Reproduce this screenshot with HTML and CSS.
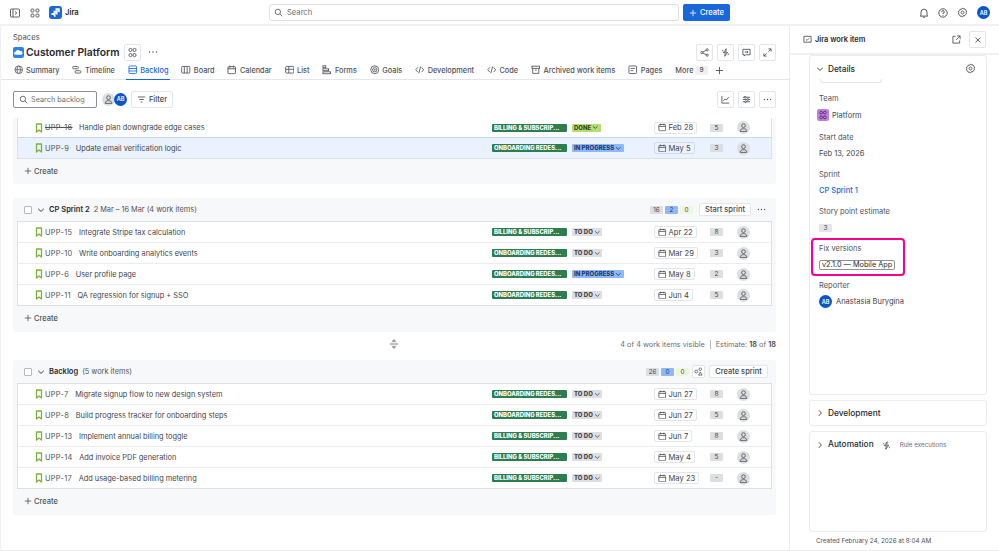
FILE: index.html
```html
<!DOCTYPE html>
<html lang="en">
<head>
<meta charset="utf-8">
<title>Jira backlog</title>
<link rel="stylesheet" href="styles.css">
</head>
<body>
<svg class="defs" xmlns="http://www.w3.org/2000/svg">
  <symbol id="story" viewBox="0 0 8 10"><path d="M1.500 1h5v8L4 7 1.500 9z" fill="none" stroke="#7fb03c" stroke-width="1.300" stroke-linejoin="round"/></symbol>
  <symbol id="person" viewBox="0 0 14 14"><circle cx="7" cy="7" r="7" fill="#dddee1"/><circle cx="7" cy="5" r="2" fill="none" stroke="#505258" stroke-width=".9"/><path d="M3.400 11.200c0-2 1.500-3 3.600-3s3.600 1 3.600 3z" fill="none" stroke="#505258" stroke-width=".9" stroke-linejoin="round"/></symbol>
  <symbol id="cal" viewBox="0 0 10 10"><rect x="1" y="1.800" width="8" height="7.400" rx="1" fill="none" stroke="#44464c" stroke-width=".9"/><path d="M1 4h8M3 .7v2M7 .7v2" stroke="#44464c" stroke-width=".9" fill="none"/></symbol>
  <symbol id="chev" viewBox="0 0 8 8"><path d="M1.200 2.800 4 5.400l2.800-2.600" fill="none" stroke="currentColor" stroke-width="1"/></symbol>
  <symbol id="chevr" viewBox="0 0 8 8"><path d="M2.800 1.200 5.400 4 2.800 6.800" fill="none" stroke="#505258" stroke-width="1"/></symbol>
  <symbol id="plus" viewBox="0 0 10 10"><path d="M5 1v8M1 5h8" stroke="currentColor" stroke-width="1" fill="none"/></symbol>
  <symbol id="people" viewBox="0 0 12 12"><circle cx="3.800" cy="3.200" r="1.700" fill="none" stroke="currentColor" stroke-width=".9"/><circle cx="8.200" cy="3.200" r="1.700" fill="none" stroke="currentColor" stroke-width=".9"/><circle cx="3.800" cy="8.800" r="1.700" fill="none" stroke="currentColor" stroke-width=".9"/><circle cx="8.200" cy="8.800" r="1.700" fill="none" stroke="currentColor" stroke-width=".9"/></symbol>
  <symbol id="bolt" viewBox="0 0 10 10"><path d="M5.800 .8 2.600 5.200h2.200L4.200 9.200l3.200-4.400H5.200zM1 3.500l1.500-1M9 6.500l-1.500 1" fill="none" stroke="#44464c" stroke-width=".9" stroke-linejoin="round"/></symbol>
  <symbol id="dots" viewBox="0 0 10 10"><circle cx="1.500" cy="5" r=".7" fill="#44464c"/><circle cx="5" cy="5" r=".7" fill="#44464c"/><circle cx="8.500" cy="5" r=".7" fill="#44464c"/></symbol>
  <symbol id="code" viewBox="0 0 10 10"><path d="M3 2.500.8 5 3 7.500M7 2.500 9.200 5 7 7.500M6 1.500 4 8.500" fill="none" stroke="#505258" stroke-width=".9"/></symbol>
  <symbol id="search" viewBox="0 0 10 10"><circle cx="4.300" cy="4.300" r="3" fill="none" stroke="#505258" stroke-width=".9"/><path d="m6.500 6.500 2.700 2.700" stroke="#505258" stroke-width=".9"/></symbol>
  <symbol id="gear" viewBox="0 0 12 12"><path d="M6 1l1 1.100 1.600-.2.500 1.500 1.400.8-.5 1.500.5 1.600-1.400.8-.5 1.500-1.600-.2L6 11l-1-1.100-1.600.2-.5-1.500-1.400-.8.5-1.600-.5-1.500 1.400-.8.500-1.500 1.600.2z" fill="none" stroke="#44464c" stroke-width=".9" stroke-linejoin="round"/><circle cx="6" cy="6" r="1.600" fill="none" stroke="#44464c" stroke-width=".9"/></symbol>
</svg>

<header class="topbar">
  <div class="top-left">
    <svg class="i-10" viewBox="0 0 10 10"><rect x=".5" y="1" width="9" height="8" rx="1" fill="none" stroke="#505258" stroke-width=".9"/><path d="M3 1v8M5 3.500 6.800 5 5 6.500" fill="none" stroke="#505258" stroke-width=".9"/></svg>
    <svg class="i-10 gap-apps" viewBox="0 0 10 10"><g fill="none" stroke="#505258" stroke-width=".9"><rect x="1" y="1" width="3" height="3" rx="1"/><rect x="6" y="1" width="3" height="3" rx="1"/><rect x="1" y="6" width="3" height="3" rx="1"/><rect x="6" y="6" width="3" height="3" rx="1"/></g></svg>
    <svg class="logo" viewBox="0 0 13 13"><rect width="13" height="13" rx="3" fill="#1868db"/><path d="M6.500 2.300h4.200v4.200A2 2 0 0 1 8.700 4.500H6.500zM4.500 4.700h4v4a2 2 0 0 1-2-2h-2zM2.500 7h4v4a2 2 0 0 1-2-2h-2z" fill="#fff"/></svg>
    <span class="brand">Jira</span>
  </div>
  <div class="top-search"><svg class="i-9" viewBox="0 0 10 10"><use href="#search"/></svg><span>Search</span></div>
  <button class="create-btn"><svg class="i-8" viewBox="0 0 10 10"><use href="#plus"/></svg>Create</button>
  <div class="top-right">
    <svg class="i-10" viewBox="0 0 10 10"><path d="M2 7.300V4.200a3 3 0 0 1 6 0v3.100l.8.8H1.200zM4 9.200h2" fill="none" stroke="#44464c" stroke-width=".9" stroke-linejoin="round"/></svg>
    <svg class="i-10" viewBox="0 0 10 10"><circle cx="5" cy="5" r="4.200" fill="none" stroke="#44464c" stroke-width=".9"/><path d="M3.700 3.900A1.300 1.300 0 1 1 5 5.300v.8M5 7v.8" fill="none" stroke="#44464c" stroke-width=".9"/></svg>
    <svg class="i-gear" viewBox="0 0 12 12"><use href="#gear"/></svg>
    <span class="avatar av-top">AB</span>
  </div>
</header>

<div class="layout">
  <main class="main">
    <div class="crumb">Spaces</div>
    <div class="title-row">
      <svg class="space-icon" viewBox="0 0 11 11"><rect width="11" height="11" rx="2" fill="#2a83ea"/><path d="M2.500 7.800a1.500 1.500 0 0 1 .2-3A2.300 2.300 0 0 1 7 4.300a1.800 1.800 0 0 1 1.300 3.500z" fill="#fff"/></svg>
      <h1>Customer Platform</h1>
      <span class="icon-btn team-btn"><svg class="i-11" viewBox="0 0 12 12"><use href="#people"/></svg></span>
      <svg class="i-10 title-dots" viewBox="0 0 10 10"><use href="#dots"/></svg>
      <div class="btn-group">
        <span class="icon-btn"><svg class="i-9" viewBox="0 0 10 10"><g fill="none" stroke="#44464c" stroke-width=".9"><circle cx="2" cy="5" r="1.200"/><circle cx="8" cy="2" r="1.200"/><circle cx="8" cy="8" r="1.200"/><path d="M3 4.500 7 2.500M3 5.500l4 2"/></g></svg></span>
        <span class="icon-btn"><svg class="i-9" viewBox="0 0 10 10"><use href="#bolt"/></svg></span>
        <span class="icon-btn"><svg class="i-9" viewBox="0 0 10 10"><path d="M1 1.500h8v6H4L2.500 9V7.500H1zM3 4.500h3.500M5.500 3.300l1.200 1.200-1.200 1.200" fill="none" stroke="#44464c" stroke-width=".9"/></svg></span>
        <span class="icon-btn"><svg class="i-9" viewBox="0 0 10 10"><path d="M6 1h3v3M9 1 6 4M4 9H1V6M1 9l3-3" fill="none" stroke="#44464c" stroke-width=".9"/></svg></span>
      </div>
    </div>
    <nav class="tabs">
      <a class="tab"><svg class="tab-icon" viewBox="0 0 10 10"><g fill="none" stroke="#505258" stroke-width=".8"><circle cx="5" cy="5" r="4"/><ellipse cx="5" cy="5" rx="1.800" ry="4"/><path d="M1 5h8"/></g></svg>Summary</a>
      <a class="tab"><svg class="tab-icon" viewBox="0 0 10 10"><g fill="none" stroke="#505258" stroke-width=".9"><rect x=".7" y="1.500" width="6" height="2.500" rx="1"/><rect x="3.300" y="6" width="6" height="2.500" rx="1"/></g></svg>Timeline</a>
      <a class="tab active"><svg class="tab-icon" viewBox="0 0 10 10"><g fill="none" stroke="#1868db" stroke-width=".9"><rect x="1" y="1" width="8" height="8" rx="1"/><path d="M1 3.700h8M1 6.300h8"/></g></svg>Backlog</a>
      <a class="tab"><svg class="tab-icon" viewBox="0 0 10 10"><g fill="none" stroke="#505258" stroke-width=".9"><rect x=".7" y="1.500" width="8.600" height="7" rx="1"/><path d="M3.500 1.500v7M6.500 1.500v7"/></g></svg>Board</a>
      <a class="tab"><svg class="tab-icon" viewBox="0 0 10 10"><use href="#cal"/></svg>Calendar</a>
      <a class="tab"><svg class="tab-icon" viewBox="0 0 10 10"><g fill="none" stroke="#505258" stroke-width=".9"><rect x=".7" y="1.500" width="8.600" height="7" rx="1"/><path d="M.7 4.500h8.600M4 1.500v7"/></g></svg>List</a>
      <a class="tab"><svg class="tab-icon" viewBox="0 0 10 10"><g fill="none" stroke="#505258" stroke-width=".9"><rect x="1" y=".8" width="3" height="2"/><rect x="1" y="4" width="6" height="2"/><rect x="1" y="7.200" width="8" height="2"/></g></svg>Forms</a>
      <a class="tab"><svg class="tab-icon" viewBox="0 0 10 10"><g fill="none" stroke="#505258" stroke-width=".9"><circle cx="5" cy="5" r="4.200"/><circle cx="5" cy="5" r="2.300"/><circle cx="5" cy="5" r=".6"/></g></svg>Goals</a>
      <a class="tab"><svg class="tab-icon" viewBox="0 0 10 10"><use href="#code"/></svg>Development</a>
      <a class="tab"><svg class="tab-icon" viewBox="0 0 10 10"><use href="#code"/></svg>Code</a>
      <a class="tab"><svg class="tab-icon" viewBox="0 0 10 10"><g fill="none" stroke="#505258" stroke-width=".9"><rect x="1" y="1.200" width="8" height="2.300"/><path d="M1.800 3.500v5.300h6.400V3.500M4 5.400h2"/></g></svg>Archived work items</a>
      <a class="tab"><svg class="tab-icon" viewBox="0 0 10 10"><g fill="none" stroke="#505258" stroke-width=".9"><rect x="1" y="1" width="8" height="8" rx="1"/><path d="M2.800 3.600h4.400M2.800 6h2.800"/></g></svg>Pages</a>
      <a class="tab tab-more">More<span class="more-chip">9</span></a>
      <svg class="i-9 tab-plus" viewBox="0 0 10 10"><use href="#plus"/></svg>
    </nav>
    <div class="toolbar">
      <div class="search-box"><svg class="i-9" viewBox="0 0 10 10"><use href="#search"/></svg><span>Search backlog</span></div>
      <div class="avatars"><svg class="tool-person" viewBox="0 0 14 14"><use href="#person"/></svg><span class="avatar av-tool">AB</span></div>
      <button class="filter-btn"><svg class="i-9" viewBox="0 0 10 10"><path d="M1 2.200h8M2.500 5h5M4 7.800h2" stroke="#44464c" stroke-width=".9" fill="none"/></svg>Filter</button>
      <div class="btn-group">
        <span class="icon-btn"><svg class="i-9" viewBox="0 0 10 10"><path d="M1 1v8h8M2.500 6.500l2-2 1.500 1 2.500-3" fill="none" stroke="#44464c" stroke-width=".9"/></svg></span>
        <span class="icon-btn"><svg class="i-9" viewBox="0 0 10 10"><g fill="none" stroke="#44464c" stroke-width=".9"><path d="M1 2.500h8M1 5h8M1 7.500h8"/><circle cx="3.500" cy="2.500" r="1" fill="#fff"/><circle cx="6.500" cy="5" r="1" fill="#fff"/><circle cx="4" cy="7.500" r="1" fill="#fff"/></g></svg></span>
        <span class="icon-btn"><svg class="i-9" viewBox="0 0 10 10"><use href="#dots"/></svg></span>
      </div>
    </div>

    <div class="board">
      <section class="sprint sprint-clipped">
        <div class="rows rows-clipped">
          <div class="row row-first"><svg class="story" viewBox="0 0 8 10"><use href="#story"/></svg><span class="key done-key">UPP-16</span><span class="summary">Handle plan downgrade edge cases</span><span class="epic">BILLING &amp; SUBSCRIP...</span><span class="status-col"><span class="status st-done">DONE<svg viewBox="0 0 8 8"><use href="#chev"/></svg></span></span><span class="date-col"><span class="date"><svg viewBox="0 0 10 10"><use href="#cal"/></svg>Feb 28</span></span><span class="pts">5</span><svg class="assignee" viewBox="0 0 14 14"><use href="#person"/></svg></div>
          <div class="row row-selected"><svg class="story" viewBox="0 0 8 10"><use href="#story"/></svg><span class="key">UPP-9</span><span class="summary">Update email verification logic</span><span class="epic">ONBOARDING REDES...</span><span class="status-col"><span class="status st-prog">IN PROGRESS<svg viewBox="0 0 8 8"><use href="#chev"/></svg></span></span><span class="date-col"><span class="date"><svg viewBox="0 0 10 10"><use href="#cal"/></svg>May 5</span></span><span class="pts">3</span><svg class="assignee" viewBox="0 0 14 14"><use href="#person"/></svg></div>
        </div>
        <div class="create-row"><svg class="i-8" viewBox="0 0 10 10"><use href="#plus"/></svg>Create</div>
      </section>

      <section class="sprint">
        <div class="sprint-head">
          <span class="check"></span><svg class="head-chev" viewBox="0 0 8 8"><use href="#chev"/></svg>
          <strong>CP Sprint 2</strong><span class="head-meta">2 Mar – 16 Mar (4 work items)</span>
          <span class="counts"><span class="count c-grey">16</span><span class="count c-blue">2</span><span class="count c-green">0</span></span>
          <button class="sprint-btn btn-start">Start sprint</button>
          <svg class="head-dots" viewBox="0 0 10 10"><use href="#dots"/></svg>
        </div>
        <div class="rows">
          <div class="row"><svg class="story" viewBox="0 0 8 10"><use href="#story"/></svg><span class="key">UPP-15</span><span class="summary">Integrate Stripe tax calculation</span><span class="epic">BILLING &amp; SUBSCRIP...</span><span class="status-col"><span class="status st-todo">TO DO<svg viewBox="0 0 8 8"><use href="#chev"/></svg></span></span><span class="date-col"><span class="date"><svg viewBox="0 0 10 10"><use href="#cal"/></svg>Apr 22</span></span><span class="pts">8</span><svg class="assignee" viewBox="0 0 14 14"><use href="#person"/></svg></div>
          <div class="row"><svg class="story" viewBox="0 0 8 10"><use href="#story"/></svg><span class="key">UPP-10</span><span class="summary">Write onboarding analytics events</span><span class="epic">ONBOARDING REDES...</span><span class="status-col"><span class="status st-todo">TO DO<svg viewBox="0 0 8 8"><use href="#chev"/></svg></span></span><span class="date-col"><span class="date"><svg viewBox="0 0 10 10"><use href="#cal"/></svg>Mar 29</span></span><span class="pts">3</span><svg class="assignee" viewBox="0 0 14 14"><use href="#person"/></svg></div>
          <div class="row"><svg class="story" viewBox="0 0 8 10"><use href="#story"/></svg><span class="key">UPP-6</span><span class="summary">User profile page</span><span class="epic">ONBOARDING REDES...</span><span class="status-col"><span class="status st-prog">IN PROGRESS<svg viewBox="0 0 8 8"><use href="#chev"/></svg></span></span><span class="date-col"><span class="date"><svg viewBox="0 0 10 10"><use href="#cal"/></svg>May 8</span></span><span class="pts">2</span><svg class="assignee" viewBox="0 0 14 14"><use href="#person"/></svg></div>
          <div class="row"><svg class="story" viewBox="0 0 8 10"><use href="#story"/></svg><span class="key">UPP-11</span><span class="summary">QA regression for signup + SSO</span><span class="epic">ONBOARDING REDES...</span><span class="status-col"><span class="status st-todo">TO DO<svg viewBox="0 0 8 8"><use href="#chev"/></svg></span></span><span class="date-col"><span class="date"><svg viewBox="0 0 10 10"><use href="#cal"/></svg>Jun 4</span></span><span class="pts">5</span><svg class="assignee" viewBox="0 0 14 14"><use href="#person"/></svg></div>
        </div>
        <div class="create-row"><svg class="i-8" viewBox="0 0 10 10"><use href="#plus"/></svg>Create</div>
      </section>

      <div class="totals">
        <svg class="drag" viewBox="0 0 10 10"><path d="M5 .5 3.200 2.500h3.600zM5 9.500 3.200 7.500h3.600zM1 4.300h8M1 5.700h8" fill="#8c8f97" stroke="#8c8f97" stroke-width=".7"/></svg>
        <span>4 of 4 work items visible</span><span class="sep"></span><span>Estimate: <b>18</b> of <b>18</b></span>
      </div>

      <section class="sprint">
        <div class="sprint-head">
          <span class="check"></span><svg class="head-chev" viewBox="0 0 8 8"><use href="#chev"/></svg>
          <strong>Backlog</strong><span class="head-meta">(5 work items)</span>
          <span class="counts"><span class="count c-grey">26</span><span class="count c-blue">0</span><span class="count c-green">0</span></span>
          <span class="mini-btn"><svg viewBox="0 0 10 10"><g fill="none" stroke="#44464c" stroke-width=".8"><circle cx="2.500" cy="5" r="1.600"/><circle cx="7" cy="2.500" r="1.400"/><path d="M7 5.500 9 9H5z"/></g></svg></span>
          <button class="sprint-btn btn-create">Create sprint</button>
        </div>
        <div class="rows">
          <div class="row"><svg class="story" viewBox="0 0 8 10"><use href="#story"/></svg><span class="key">UPP-7</span><span class="summary">Migrate signup flow to new design system</span><span class="epic">ONBOARDING REDES...</span><span class="status-col"><span class="status st-todo">TO DO<svg viewBox="0 0 8 8"><use href="#chev"/></svg></span></span><span class="date-col"><span class="date"><svg viewBox="0 0 10 10"><use href="#cal"/></svg>Jun 27</span></span><span class="pts">8</span><svg class="assignee" viewBox="0 0 14 14"><use href="#person"/></svg></div>
          <div class="row"><svg class="story" viewBox="0 0 8 10"><use href="#story"/></svg><span class="key">UPP-8</span><span class="summary">Build progress tracker for onboarding steps</span><span class="epic">ONBOARDING REDES...</span><span class="status-col"><span class="status st-todo">TO DO<svg viewBox="0 0 8 8"><use href="#chev"/></svg></span></span><span class="date-col"><span class="date"><svg viewBox="0 0 10 10"><use href="#cal"/></svg>Jun 27</span></span><span class="pts">5</span><svg class="assignee" viewBox="0 0 14 14"><use href="#person"/></svg></div>
          <div class="row"><svg class="story" viewBox="0 0 8 10"><use href="#story"/></svg><span class="key">UPP-13</span><span class="summary">Implement annual billing toggle</span><span class="epic">BILLING &amp; SUBSCRIP...</span><span class="status-col"><span class="status st-todo">TO DO<svg viewBox="0 0 8 8"><use href="#chev"/></svg></span></span><span class="date-col"><span class="date"><svg viewBox="0 0 10 10"><use href="#cal"/></svg>Jun 7</span></span><span class="pts">8</span><svg class="assignee" viewBox="0 0 14 14"><use href="#person"/></svg></div>
          <div class="row"><svg class="story" viewBox="0 0 8 10"><use href="#story"/></svg><span class="key">UPP-14</span><span class="summary">Add invoice PDF generation</span><span class="epic">BILLING &amp; SUBSCRIP...</span><span class="status-col"><span class="status st-todo">TO DO<svg viewBox="0 0 8 8"><use href="#chev"/></svg></span></span><span class="date-col"><span class="date"><svg viewBox="0 0 10 10"><use href="#cal"/></svg>May 4</span></span><span class="pts">5</span><svg class="assignee" viewBox="0 0 14 14"><use href="#person"/></svg></div>
          <div class="row"><svg class="story" viewBox="0 0 8 10"><use href="#story"/></svg><span class="key">UPP-17</span><span class="summary">Add usage-based billing metering</span><span class="epic">BILLING &amp; SUBSCRIP...</span><span class="status-col"><span class="status st-todo">TO DO<svg viewBox="0 0 8 8"><use href="#chev"/></svg></span></span><span class="date-col"><span class="date"><svg viewBox="0 0 10 10"><use href="#cal"/></svg>May 23</span></span><span class="pts">-</span><svg class="assignee" viewBox="0 0 14 14"><use href="#person"/></svg></div>
        </div>
        <div class="create-row"><svg class="i-8" viewBox="0 0 10 10"><use href="#plus"/></svg>Create</div>
      </section>
    </div>
  </main>

  <aside class="panel">
    <div class="panel-head">
      <svg class="i-9" viewBox="0 0 10 10"><path d="M1 1.500h8v6.500H1zM3.200 4.800l1.300 1.200 2.300-2.300" fill="none" stroke="#44464c" stroke-width=".9"/></svg>
      <span class="panel-title">Jira work item</span>
      <svg class="i-9 panel-ext" viewBox="0 0 10 10"><path d="M4 1.500H1v7.500h7.500V6M5.500 1h3.500v3.500M9 1 4.500 5.500" fill="none" stroke="#44464c" stroke-width=".9"/></svg>
      <span class="close-btn"><svg viewBox="0 0 8 8"><path d="m1.500 1.500 5 5M6.500 1.500l-5 5" stroke="#505258" stroke-width=".9"/></svg></span>
    </div>
    <div class="panel-body">
      <div class="card card-details">
        <div class="details-head">
          <svg class="panel-chev" viewBox="0 0 8 8"><use href="#chev"/></svg>
          <span class="card-title">Details</span>
          <svg class="i-gear details-gear" viewBox="0 0 12 12"><use href="#gear"/></svg>
        </div>
        <div class="clipped-chip"></div>
        <div class="field f-team"><div class="label">Team</div><div class="value value-team"><span class="team-icon"><svg viewBox="0 0 12 12"><use href="#people"/></svg></span>Platform</div></div>
        <div class="field"><div class="label">Start date</div><div class="value">Feb 13, 2026</div></div>
        <div class="field"><div class="label">Sprint</div><div class="value link">CP Sprint 1</div></div>
        <div class="field"><div class="label">Story point estimate</div><div class="value"><span class="pts pts-panel">3</span></div></div>
        <div class="field field-fix">
          <div class="label">Fix versions</div><div class="value"><span class="version">v2.1.0 — Mobile App</span></div>
          <span class="highlight"></span>
        </div>
        <div class="field"><div class="label">Reporter</div><div class="value value-rep"><span class="avatar av-rep">AB</span>Anastasia Burygina</div></div>
      </div>
      <div class="card card-dev"><svg class="panel-chevr" viewBox="0 0 8 8"><use href="#chevr"/></svg><span class="card-title">Development</span></div>
      <div class="card card-auto"><svg class="panel-chevr" viewBox="0 0 8 8"><use href="#chevr"/></svg><span class="card-title">Automation</span><svg class="auto-bolt" viewBox="0 0 10 10"><use href="#bolt"/></svg><span class="auto-meta">Rule executions</span></div>
      <div class="created">Created February 24, 2026 at 8:04 AM</div>
    </div>
  </aside>
</div>
</body>
</html>
```
FILE: styles.css
```css
* { box-sizing: border-box; }
html, body { margin: 0; padding: 0; height: 551px; overflow: hidden; background: #fff; }
body { font-family: Inter, "Noto Sans", sans-serif; font-size: 8px; color: #292a2e; }
svg { display: block; flex: none; }
.defs { display: none; }
button { font-family: inherit; margin: 0; }
.i-8 { width: 8px; height: 8px; }
.i-9 { width: 9px; height: 9px; }
.i-10 { width: 10px; height: 10px; }
.i-11 { width: 11px; height: 11px; }
.i-gear { width: 11px; height: 11px; }

/* top bar */
.topbar { height: 26px; display: flex; align-items: center; padding: 1px 9px 0 10px; border-bottom: 2px solid #f0f1f2; }
.top-left { width: 259px; display: flex; align-items: center; }
.gap-apps { margin-left: 10px; }
.logo { width: 13px; height: 13px; margin-left: 9px; }
.brand { margin-left: 3px; font-weight: 600; font-size: 7.6px; }
.top-search { width: 410px; height: 17px; border: 1px solid #dcdfe4; border-radius: 3px; display: flex; align-items: center; gap: 4px; padding-left: 4px; color: #6b6e76; font-size: 7.6px; }
.create-btn { width: 47px; height: 17px; margin-left: 4px; background: #1868db; color: #fff; border: 0; border-radius: 2px; display: flex; align-items: center; justify-content: center; gap: 3px; font-size: 7.6px; font-weight: 500; padding: 0; }
.top-right { margin-left: auto; display: flex; align-items: center; gap: 9px; }
.avatar { display: inline-flex; align-items: center; justify-content: center; border-radius: 50%; background: #0b55c8; color: #fff; font-weight: 600; flex: none; }
.av-top { width: 13px; height: 13px; font-size: 5.5px; }

/* main column */
.layout { display: flex; height: 525px; }
.main { width: 790px; height: 525px; border-right: 1px solid #ebecf0; border-left: 1px solid #f0f1f2; border-bottom: 1px solid #ebecf0; padding: 0 13px 0 12px; overflow: hidden; }
.crumb { margin-top: 7px; height: 10px; line-height: 10px; font-size: 7.6px; color: #505258; }
.title-row { height: 18px; display: flex; align-items: center; }
.space-icon { width: 11px; height: 11px; }
h1 { margin: 0 0 0 2px; font-size: 10.3px; font-weight: 600; color: #292a2e; }
.icon-btn { width: 17px; height: 17px; border: 1px solid #e4e5e8; border-radius: 2px; display: flex; align-items: center; justify-content: center; color: #44464c; }
.team-btn { margin-left: 5px; }
.title-dots { margin-left: 7px; }
.btn-group { margin-left: auto; display: flex; gap: 4px; }
.tabs { margin: 0 -13px 0 -12px; padding: 0 12.5px; height: 19px; border-bottom: 1px solid #e4e5e8; display: flex; align-items: flex-start; gap: 12.9px; }
.tab { height: 19px; display: flex; align-items: center; gap: 3px; padding-bottom: 1px; font-size: 7.35px; font-weight: 500; color: #505258; white-space: nowrap; }
.tab-icon { width: 9.5px; height: 9.5px; }
.tab.active { color: #1868db; border-bottom: 1.5px solid #1868db; padding: 0 2px; margin: 0 -2px; }
.tab-more { gap: 2px; }
.more-chip { background: #f0f1f2; border-radius: 2px; padding: 0 4px; height: 9px; line-height: 9px; font-size: 6.5px; }
.tab-plus { margin: 5px 0 0 -5px; color: #505258; }

.toolbar { height: 38px; display: flex; align-items: center; }
.search-box { width: 84px; height: 17px; border: 1px solid #8c8f97; border-radius: 2px; display: flex; align-items: center; gap: 3px; padding-left: 5px; font-size: 7.3px; color: #6b6e76; }
.avatars { display: flex; margin-left: 5px; align-items: center; }
.tool-person { width: 13px; height: 13px; }
.av-tool { width: 13px; height: 13px; font-size: 5.5px; margin-left: -1px; }
.filter-btn { margin-left: 4px; width: 42px; height: 17px; border: 1px solid #e4e5e8; background: #fff; border-radius: 2px; display: flex; align-items: center; justify-content: center; gap: 3px; padding: 0; font-size: 7.5px; font-weight: 500; color: #44464c; }

/* board */
.sprint { background: #f7f8f9; border-radius: 3px; padding: 0 4px; }
.sprint-clipped { height: 66px; margin-bottom: 14px; border-radius: 0 0 3px 3px; overflow: hidden; }
.sprint-head { height: 23px; padding-left: 7px; display: flex; align-items: center; font-size: 7.35px; }
.check { width: 8px; height: 8px; border: 1px solid #b7b9be; border-radius: 1px; background: #fff; flex: none; }
.head-chev { width: 8px; height: 8px; margin-left: 5px; color: #44464c; }
.sprint-head strong { margin-left: 4px; font-weight: 600; font-size: 7.5px; }
.head-meta { margin-left: 4px; color: #505258; }
.counts { margin-left: auto; display: flex; gap: 2px; }
.count { width: 13px; height: 8px; line-height: 8px; border-radius: 1px; text-align: center; font-size: 6.3px; color: #44464c; }
.c-grey { background: #dddee1; }
.c-blue { background: #8fb8f6; color: #1d3a6b; }
.c-green { background: #eef6dc; }
.sprint-btn { height: 13px; border: 1px solid #e4e5e8; background: #fff; border-radius: 2px; padding: 0; font-size: 7.5px; font-weight: 500; color: #44464c; }
.btn-start { width: 52px; margin-left: 6px; }
.head-dots { width: 9px; height: 9px; margin: 0 6px 0 6px; }
.btn-create { width: 59px; margin: 0 4px 0 4px; }
.mini-btn { width: 13px; height: 13px; margin-left: 3px; border: 1px solid #e4e5e8; background: #fff; border-radius: 2px; display: flex; align-items: center; justify-content: center; }
.mini-btn svg { width: 9px; height: 9px; }

.rows { background: #fff; border: 1px solid #dcdfe4; }
.rows-clipped { border-top: 0; }
.row { height: 21px; display: flex; align-items: center; padding-left: 17px; padding-right: 21px; border-bottom: 1px solid #ebecf0; font-size: 7.4px; color: #44464c; }
.row:last-child { height: 20px; border-bottom: 0; }
.row-first { height: 20px; border-bottom-color: #c9d8ec; }
.row-selected { background: #e9f2fe; }
.story { width: 8px; height: 10px; }
.key { margin-left: 2px; letter-spacing: .32px; color: #505258; white-space: nowrap; }
.done-key { text-decoration: line-through; }
.summary { margin-left: 6.5px; flex: 1; min-width: 0; white-space: nowrap; overflow: hidden; }
.epic { width: 75px; height: 8px; line-height: 8px; background: #2e7d50; color: #fff; border-radius: 1px; padding-left: 2px; font-size: 5.9px; font-weight: 800; white-space: nowrap; flex: none; }
.status-col { width: 87px; padding-left: 5px; flex: none; display: flex; }
.status { height: 8px; line-height: 8px; padding: 0 2px; border-radius: 1px; display: flex; align-items: center; font-size: 6px; font-weight: 800; color: #292a2e; white-space: nowrap; }
.status svg { width: 6.5px; height: 6.5px; margin-left: 1px; }
.st-done { background: #b3df72; color: #37471f; }
.st-prog { background: #8fb8f6; color: #1d3a6b; }
.st-todo { background: #dddee1; color: #44464c; }
.date-col { min-width: 56px; flex: none; display: flex; }
.date { height: 12px; border: 1px solid #e4e5e8; background: #fff; border-radius: 2px; display: flex; align-items: center; gap: 2px; padding: 0 3px; font-size: 7.6px; color: #44464c; white-space: nowrap; }
.row-selected .date { background: #e9f2fe; border-color: #d3dbe6; }
.date svg { width: 8.5px; height: 8.5px; }
.pts { width: 13px; height: 8px; line-height: 8px; text-align: center; background: #dddee1; color: #44464c; border-radius: 1px; font-size: 6.5px; flex: none; display: inline-block; }
.assignee { width: 13px; height: 13px; margin-left: 14px; }
.create-row { height: 26px; padding: 0 0 2px 7px; display: flex; align-items: center; gap: 2px; font-size: 7.5px; font-weight: 500; color: #505258; }

.totals { position: relative; height: 28px; padding-bottom: 3px; display: flex; align-items: center; justify-content: flex-end; font-size: 7.3px; color: #6b6e76; }
.totals b { font-weight: 600; color: #44464c; }
.sep { width: 1px; height: 9px; background: #b7b9be; margin: 0 5px; }
.drag { position: absolute; left: 376px; top: 7px; width: 10px; height: 10px; }

/* side panel */
.panel { width: 209px; height: 525px; border-bottom: 1px solid #ebecf0; }
.panel-head { height: 29px; padding: 0 13px; border-bottom: 2px solid #eef0f2; display: flex; align-items: center; }
.panel-title { margin-left: 3px; font-size: 7.4px; font-weight: 600; color: #292a2e; }
.panel-ext { margin-left: auto; }
.close-btn { width: 17px; height: 17px; margin-left: 8px; border: 1px solid #e4e5e8; border-radius: 2px; display: flex; align-items: center; justify-content: center; }
.close-btn svg { width: 8px; height: 8px; }
.panel-body { padding: 0 12px 0 19px; }
.card { border: 1px solid #ebecf0; border-radius: 3px; margin-bottom: 5px; background: #fff; }
.card-details { height: 340px; position: relative; overflow: hidden; }
.details-head { height: 24px; padding: 1px 10px 0 6px; display: flex; align-items: center; }
.panel-chev { width: 8px; height: 8px; color: #505258; }
.card-title { margin-left: 4px; font-size: 8.3px; font-weight: 500; color: #292a2e; }
.details-gear { margin-left: auto; }
.clipped-chip { margin: -1px 0 0 10px; width: 62px; height: 4px; border: 1px solid #e4e5e8; border-top: 0; border-radius: 0 0 3px 3px; }
.field { padding-left: 9px; height: 37px; }
.f-team { margin-top: 10px; height: 39px; }
.label { height: 12px; line-height: 12px; font-size: 7.5px; color: #505258; }
.value { margin-top: 3px; height: 13px; display: flex; align-items: center; font-size: 7.5px; color: #44464c; }
.value-team { margin-top: 3.5px; margin-left: -2px; gap: 3px; }
.team-icon { width: 12px; height: 12px; border-radius: 2px; background: #c07fe0; display: flex; align-items: center; justify-content: center; color: #3a2350; }
.team-icon svg { width: 10px; height: 10px; }
.link { color: #1868db; font-weight: 500; }
.pts-panel { background: #e4e5e8; }
.field-fix { position: relative; }
.version { height: 10px; line-height: 8px; border: 1px solid #8c8f97; border-radius: 2px; padding: 0 2px; font-size: 7.3px; color: #292a2e; white-space: nowrap; }
.highlight { position: absolute; left: 1px; top: -5px; width: 94px; height: 38px; border: 2.5px solid #f90092; border-radius: 4px; }
.value-rep { gap: 4px; }
.av-rep { width: 13px; height: 13px; font-size: 5.5px; }
.card-dev { height: 26px; display: flex; align-items: center; padding-left: 6px; }
.card-auto { height: 101px; display: flex; align-items: flex-start; padding: 7px 0 0 6px; margin-bottom: 0; }
.panel-chevr { width: 8px; height: 8px; }
.card-auto .panel-chevr { margin-top: 2px; }
.auto-bolt { width: 9px; height: 9px; margin: 2px 0 0 8px; }
.auto-meta { margin: 2px 0 0 9px; font-size: 6.25px; color: #6b6e76; }
.created { margin-left: 7px; margin-top: 5px; font-size: 6.3px; color: #505258; }
```
